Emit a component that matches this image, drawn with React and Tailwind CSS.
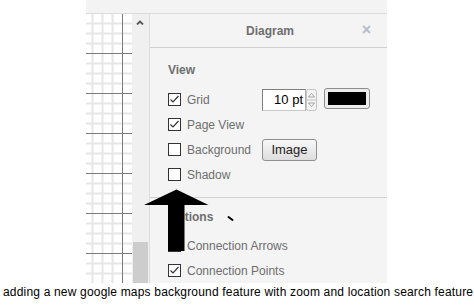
import React from 'react';

const Box = ({ checked }) => (
  <svg width="13" height="13" viewBox="0 0 13 13" className="shrink-0">
    <rect x="0.5" y="0.5" width="12" height="12" fill="#fff" stroke="#333" />
    {checked && <polyline points="2.5,6.5 5,9 10.5,3" fill="none" stroke="#333" strokeWidth="1.2" />}
  </svg>
);

const Row = ({ checked, label, children }) => (
  <div className="flex items-center h-[25px]">
    <Box checked={checked} />
    <span className="ml-[6px] w-[75px] whitespace-nowrap text-[12px] text-[#6e6e6e]">{label}</span>
    {children}
  </div>
);

// canvas grid: light line every 10px, dark one every 40px
const Grid = () => {
  const lines = [];
  for (let x = 6; x < 36; x += 10) {
    lines.push(<rect key={'v' + x} x={x - 0.5} y="0" width="2" height="269" fill="#e6e6e6" />);
  }
  for (let y = 9; y < 269; y += 10) {
    const dark = (y + 1) % 40 === 0;
    lines.push(<rect key={'h' + y} x="0" y={dark ? y : y - 0.5} width="46" height={dark ? 1 : 2} fill={dark ? '#7a7a7a' : '#e6e6e6'} />);
  }
  lines.push(<rect key="vd" x="36" y="0" width="1" height="269" fill="#7a7a7a" />);
  return (
    <svg width="46" height="269" className="block bg-white">
      {lines}
    </svg>
  );
};

export default function App() {
  return (
    <div className="relative w-[474px] h-[305px] bg-white overflow-hidden font-['Liberation_Sans',Arial,sans-serif]">
      <div className="flex h-[283px]">
        <div className="w-[86px]" />
        <div className="w-[301px] flex flex-col">
          <div className="h-[14px] shrink-0 bg-[#f3f3f3] border-b border-[#dcdcdc]" />
          <div className="flex flex-1 overflow-hidden">
            <Grid />
            <div className="w-[17px] flex flex-col justify-between bg-[#f0f0f0]">
              <div className="flex justify-center pt-[6px] pr-px">
                <svg width="8" height="5" viewBox="0 0 8 5">
                  <polyline points="1,4.5 4,1.5 7,4.5" fill="none" stroke="#555" strokeWidth="1.8" />
                </svg>
              </div>
              <div className="h-[41px] mx-px bg-[#cdcdcd]" />
            </div>
            <div className="flex-1 flex flex-col bg-[#f4f4f4] border-l border-[#dedede] overflow-hidden">
              <div className="relative h-[34px] shrink-0 flex items-center justify-center border-b border-[#cfcfcf]">
                <span className="text-[12px] font-bold text-[#6e6e6e] pl-[3px]">Diagram</span>
                <span className="absolute right-[16px] top-[8px] text-[16px] leading-[16px] font-bold text-[#b4bccb]">×</span>
              </div>
              <div className="pl-[18px] pt-[14px]">
                <div className="h-[16px] leading-[16px] text-[12px] font-bold text-[#6e6e6e]">View</div>
                <div className="mt-[9px]">
                  <Row checked label="Grid">
                    <div className="flex items-center">
                      <div className="w-[44px] h-[22px] bg-white border border-[#7f7f7f] border-r-[#b0b0b0] border-b-[#c8c8c8] flex items-center justify-end pr-[2px] text-[13px] text-black">10 pt</div>
                      <svg width="11" height="22" viewBox="0 0 11 22">
                        <rect x="0.5" y="0.5" width="10" height="21" rx="2" fill="#f4f4f4" stroke="#c4c4c4" />
                        <line x1="1" y1="11" x2="10" y2="11" stroke="#c4c4c4" />
                        <polygon points="2.5,8 5.5,4.5 8.5,8" fill="#fff" stroke="#8a8a8a" strokeWidth="0.8" />
                        <polygon points="2.5,14 5.5,17.5 8.5,14" fill="#fff" stroke="#8a8a8a" strokeWidth="0.8" />
                      </svg>
                      <div className="ml-[7px] -mt-[3px] w-[46px] h-[21px] rounded-[3px] border border-[#8c8c8c] bg-[#ececec] p-[3px]">
                        <div className="w-full h-full bg-black" />
                      </div>
                    </div>
                  </Row>
                  <Row checked label="Page View" />
                  <Row label="Background">
                    <button className="w-[55px] h-[22px] rounded-[3px] border border-[#8f8f8f] bg-gradient-to-b from-[#f8f8f8] to-[#dddddd] text-[13px] text-[#222] leading-none">Image</button>
                  </Row>
                  <Row label="Shadow" />
                </div>
              </div>
              <div className="mt-[10px] border-b border-[#d2d2d2]" />
              <div className="pl-[18px] pt-[11px]">
                <div className="h-[16px] leading-[16px] text-[12px] font-bold text-[#6e6e6e]">Options</div>
                <div className="mt-[8px]">
                  <Row checked label="Connection Arrows" />
                  <Row checked label="Connection Points" />
                </div>
              </div>
            </div>
          </div>
        </div>
      </div>
      <p className="pl-[3px] pt-[2px] text-[12px] leading-[14px] tracking-[0.18px] text-black whitespace-nowrap">
        adding a new google maps background feature with zoom and location search feature
      </p>
      {/* annotation arrow drawn over the screenshot */}
      <svg className="absolute left-0 top-0" width="474" height="305">
        <polygon points="176.5,189.5 144,205 168,205 168,251 184.5,251 184.5,205 208.5,205" fill="#000" />
        <line x1="228.5" y1="217" x2="232.5" y2="220" stroke="#000" strokeWidth="2" strokeLinecap="round" />
      </svg>
    </div>
  );
}
